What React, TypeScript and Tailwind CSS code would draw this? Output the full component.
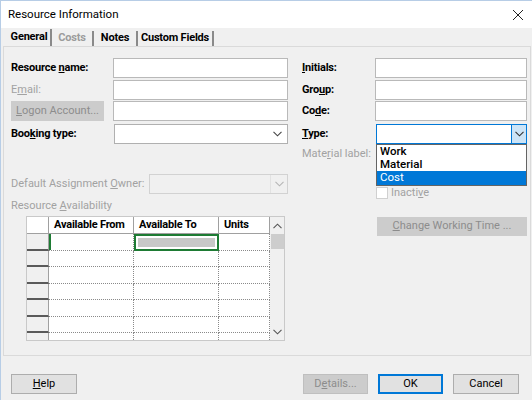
import React from 'react';

const Chevron = ({ className = '' }: { className?: string }) => (
  <svg width="9" height="6" viewBox="0 0 9 6" className={className}>
    <polyline points="0.5,0.8 4.5,4.8 8.5,0.8" fill="none" stroke="currentColor" strokeWidth="1.1" />
  </svg>
);

const TextBox = ({ className = '' }: { className?: string }) => (
  <div className={`h-[20px] bg-white border border-[#b9b9b9] ${className}`} />
);

const Label = ({ children, className = '' }: { children: React.ReactNode; className?: string }) => (
  <div className={`text-[11px] font-bold tracking-[-0.2px] leading-[20px] ${className}`}>{children}</div>
);

const rows = [0, 1, 2, 3, 4, 5, 6];

export default function App() {
  return (
    <div className="w-[532px] h-[400px] bg-[#f0f0f0] border-t border-l border-[#b7cde6] font-['Roboto',sans-serif] text-black whitespace-nowrap flex flex-col overflow-hidden">
      {/* Title bar */}
      <div className="h-[27px] bg-white flex items-center justify-between pl-[7px] pr-[8px]">
        <span className="text-[11.5px]">Resource Information</span>
        <svg width="12" height="12" viewBox="0 0 12 12">
          <path d="M1 1 L11 11 M11 1 L1 11" stroke="#222" strokeWidth="1" />
        </svg>
      </div>

      {/* Tabs */}
      <div className="h-[18px] flex items-end pl-[7px] text-[11px] font-bold tracking-[-0.2px]">
        <div className="w-[44px] h-[17px] border-r-2 border-[#8a8a8a] flex items-center justify-center">General</div>
        <div className="w-[42px] h-[15px] border-r-2 border-[#8a8a8a] flex items-center justify-center text-[#9c9c9c]">Costs</div>
        <div className="w-[44px] h-[15px] border-r-2 border-[#8a8a8a] flex items-center justify-center">Notes</div>
        <div className="w-[76px] h-[15px] border-r-2 border-[#8a8a8a] flex items-center justify-center">Custom Fields</div>
      </div>

      {/* Panel */}
      <div className="mx-[2px] mr-[1px] h-[310px] border border-[#dadada] pt-[11px] pl-[7px] pr-[3px] flex flex-col">
        <div className="flex">
          {/* Left column */}
          <div className="w-[277px] flex flex-col">
            <div className="flex h-[20px]">
              <Label className="w-[102px]">Resource <u>n</u>ame:</Label>
              <TextBox className="w-[175px]" />
            </div>
            <div className="flex h-[20px] mt-[2px]">
              <div className="w-[102px] text-[11px] leading-[20px] text-[#a2a2a2]">E<u>m</u>ail:</div>
              <TextBox className="w-[175px]" />
            </div>
            <div className="flex h-[20px] mt-[1px]">
              <div className="w-[93px] h-[20px] bg-[#cccccc] text-[11px] text-[#8c8c8c] flex items-center justify-center">
                <span><u>L</u>ogon Account...</span>
              </div>
              <div className="w-[9px]" />
              <TextBox className="w-[175px]" />
            </div>
            <div className="flex h-[20px] mt-[3px]">
              <Label className="w-[103px]">Boo<u>k</u>ing type:</Label>
              <div className="w-[174px] h-[20px] bg-white border border-[#b0b0b0] flex items-center justify-end pr-[5px] text-[#444]">
                <Chevron />
              </div>
            </div>
            <div className="flex h-[20px] mt-[30px]">
              <div className="w-[138px] text-[11px] leading-[20px] text-[#a2a2a2]">Default Assignment <u>O</u>wner:</div>
              <div className="w-[139px] h-[20px] bg-[#f0f0f0] border border-[#d2d2d2] flex justify-end">
                <div className="w-[17px] border-l border-[#e2e2e2] flex items-center justify-center text-[#b5b5b5]">
                  <Chevron />
                </div>
              </div>
            </div>
          </div>

          {/* Right column */}
          <div className="ml-[14px] w-[225px] flex flex-col">
            <div className="flex h-[20px]">
              <Label className="w-[73px]"><u>I</u>nitials:</Label>
              <TextBox className="w-[152px]" />
            </div>
            <div className="flex h-[20px] mt-[2px]">
              <Label className="w-[73px]">Gro<u>u</u>p:</Label>
              <TextBox className="w-[152px]" />
            </div>
            <div className="flex h-[20px] mt-[1px]">
              <Label className="w-[73px]">Co<u>d</u>e:</Label>
              <TextBox className="w-[152px]" />
            </div>
            <div className="flex h-[20px] mt-[3px]">
              <Label className="w-[74px]"><u>T</u>ype:</Label>
              <div className="relative w-[151px]">
                <div className="w-[151px] h-[20px] bg-white border border-[#0078d7] flex justify-end">
                  <div className="w-[15px] bg-[#cce4f7] border-l border-[#0078d7] flex items-center justify-center text-[#333]">
                    <Chevron />
                  </div>
                </div>
                {/* Open list */}
                <div className="absolute left-0 top-[20px] w-[151px] bg-white border border-[#646464] text-[11.5px] font-medium leading-[13px] z-10">
                  <div className="pl-[3px] h-[13px]">Work</div>
                  <div className="pl-[3px] h-[13px]">Material</div>
                  <div className="pl-[3px] h-[14px] bg-[#0078d7] text-white font-normal">Cost</div>
                </div>
              </div>
            </div>
            <div className="flex h-[20px]">
              <div className="w-[74px] text-[11px] leading-[20px] text-[#a2a2a2]">Mate<u>r</u>ial label:</div>
              <div className="w-[151px] h-[20px] bg-[#f0f0f0] border border-[#d2d2d2]" />
            </div>
            <div className="flex items-center h-[12px] mt-[23px] pl-[74px]">
              <div className="w-[12px] h-[12px] bg-white border border-[#d0d0d0]" />
              <span className="ml-[3px] text-[11px] text-[#a2a2a2]">Inacti<u>v</u>e</span>
            </div>
          </div>
        </div>

        <div className="flex">
          {/* Resource availability */}
          <div className="w-[279px] flex flex-col">
            <div className="text-[11px] leading-[14px] text-[#a2a2a2]">Resource <u>A</u>vailability</div>
            <div className="ml-[15px] mt-[3px] w-[259px] h-[125px] flex border border-[#c9c9c9] bg-white overflow-hidden">
              <div className="w-[243px] flex flex-col">
                <div className="flex h-[17px] shrink-0 border-b border-[#a0a0a0] text-[11px] font-bold tracking-[-0.2px]">
                  <div className="w-[22px] border-r border-[#a0a0a0] bg-white" />
                  <div className="w-[85px] border-r border-[#a0a0a0] pl-[5px] leading-[16px]">Available From</div>
                  <div className="w-[85px] border-r border-[#a0a0a0] pl-[5px] leading-[16px]">Available To</div>
                  <div className="w-[51px] border-r border-[#a0a0a0] pl-[5px] leading-[16px]">Units</div>
                </div>
                {rows.map((r) => (
                  <div key={r} className="flex h-[16.5px] shrink-0">
                    <div className="w-[22px] bg-[#f0f0f0] border-b-2 border-[#5a5a5a] border-r border-r-[#a0a0a0]" />
                    <div className="w-[85px] flex border-r border-b border-dotted border-[#8a8a8a]">
                      {r === 0 && <div className="w-[2px] h-full bg-[#1e7b34]" />}
                    </div>
                    {r === 0 ? (
                      <div className="w-[85px] border-2 border-[#1e7b34] p-[2px] bg-white">
                        <div className="w-full h-full bg-[#c8c8c8]" />
                      </div>
                    ) : (
                      <div className="w-[85px] border-r border-b border-dotted border-[#8a8a8a]" />
                    )}
                    <div className="w-[51px] border-r border-b border-dotted border-[#8a8a8a]" />
                  </div>
                ))}
              </div>
              {/* scrollbar */}
              <div className="w-[16px] bg-[#f0f0f0] flex flex-col items-center">
                <div className="h-[17px] flex items-center justify-center text-[#555]">
                  <Chevron className="rotate-180" />
                </div>
                <div className="w-[13px] h-[15px] bg-[#cdcdcd]" />
                <div className="flex-1" />
                <div className="h-[16px] flex items-center justify-center text-[#555]">
                  <Chevron />
                </div>
              </div>
            </div>
          </div>
          <div className="ml-[92px] mt-[18px]">
            <div className="w-[150px] h-[19px] bg-[#cccccc] text-[11px] text-[#8c8c8c] flex items-center justify-center">
              <span><u>C</u>hange Working Time ...</span>
            </div>
          </div>
        </div>
      </div>

      {/* Buttons */}
      <div className="flex items-center mt-[18px] pl-[10px] text-[11px]">
        <div className="w-[66px] h-[20px] bg-[#e1e1e1] border border-[#adadad] flex items-center justify-center">
          <span><u>H</u>elp</span>
        </div>
        <div className="ml-[226px] w-[65px] h-[20px] bg-[#cccccc] border border-[#bfbfbf] flex items-center justify-center text-[#8c8c8c]">
          <span>D<u>e</u>tails...</span>
        </div>
        <div className="ml-[10px] w-[65px] h-[20px] bg-[#e1e1e1] border-2 border-[#0078d7] flex items-center justify-center">
          <span>OK</span>
        </div>
        <div className="ml-[10px] w-[66px] h-[20px] bg-[#e1e1e1] border border-[#adadad] flex items-center justify-center">
          <span>Cancel</span>
        </div>
      </div>
    </div>
  );
}
